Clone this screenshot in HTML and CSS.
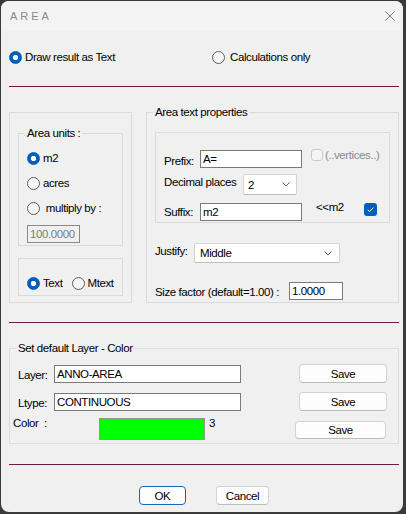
FILE: index.html
```html
<!DOCTYPE html>
<html>
<head>
<meta charset="utf-8">
<title>AREA</title>
<link rel="stylesheet" href="styles.css">
</head>
<body>
<div class="window">
  <div class="titlebar">
    <span class="title">AREA</span>
    <svg class="close" width="10" height="10" viewBox="0 0 10 10"><path d="M0.5 0.5L9.5 9.5M9.5 0.5L0.5 9.5" stroke="#808080" stroke-width="1" fill="none"/></svg>
  </div>
  <div class="content">
    <div class="mode-row">
      <div class="opt opt-draw"><span class="radio on"></span>Draw result as Text</div>
      <div class="opt opt-calc"><span class="radio"></span>Calculations only</div>
    </div>
    <div class="sep sep-top"></div>

    <div class="main-row">
      <div class="units-box">
        <fieldset class="units-group">
          <legend>Area units :</legend>
          <div class="opt unit-opt"><span class="radio on"></span>m2</div>
          <div class="opt unit-opt"><span class="radio"></span>acres</div>
          <div class="opt unit-opt"><span class="radio"></span>&nbsp;multiply by :</div>
          <div class="field field-disabled mult-field">100.0000</div>
        </fieldset>
        <div class="type-box">
          <div class="opt"><span class="radio on"></span>Text</div>
          <div class="opt mtext-opt"><span class="radio"></span>Mtext</div>
        </div>
      </div>

      <fieldset class="props-group">
        <legend>Area text properties</legend>
        <div class="props-inner">
          <div class="prow prow-prefix">
            <span class="lbl lbl-prefix">Prefix:</span>
            <div class="field field-prefix">A=</div>
            <span class="check check-disabled"></span>
            <span class="vert-text">(..vertices..)</span>
          </div>
          <div class="prow prow-dec">
            <span class="lbl lbl-dec">Decimal places</span>
            <div class="combo combo-dec"><span>2</span><svg class="chev" width="8" height="5" viewBox="0 0 8 5"><path d="M0.5 0.5L4 4L7.5 0.5" stroke="#606060" stroke-width="1" fill="none"/></svg></div>
          </div>
          <div class="prow prow-suffix">
            <span class="lbl lbl-suffix">Suffix:</span>
            <div class="field field-suffix">m2</div>
            <span class="m2-text">&lt;&lt;m2</span>
            <svg class="check-on" width="13" height="13" viewBox="0 0 13 13"><rect x="0" y="0" width="13" height="13" rx="3" fill="#005fb8"/><path d="M3.6 6.7L5.6 8.6L9.4 4.6" stroke="#ffffff" stroke-width="1" fill="none"/></svg>
          </div>
        </div>
        <div class="prow prow-justify">
          <span class="lbl lbl-justify">Justify:</span>
          <div class="combo combo-justify"><span>Middle</span><svg class="chev" width="8" height="5" viewBox="0 0 8 5"><path d="M0.5 0.5L4 4L7.5 0.5" stroke="#606060" stroke-width="1" fill="none"/></svg></div>
        </div>
        <div class="prow prow-size">
          <span class="lbl lbl-size">Size factor (default=1.00) :</span>
          <div class="field field-size">1.0000</div>
        </div>
      </fieldset>
    </div>

    <div class="sep sep-mid"></div>

    <fieldset class="layer-group">
      <legend>Set default Layer - Color</legend>
      <div class="lrow lrow-layer">
        <span class="lbl lbl-layer">Layer:</span>
        <div class="field field-layer">ANNO-AREA</div>
        <div class="btn btn-save">Save</div>
      </div>
      <div class="lrow lrow-ltype">
        <span class="lbl lbl-layer">Ltype:</span>
        <div class="field field-layer">CONTINUOUS</div>
        <div class="btn btn-save">Save</div>
      </div>
      <div class="lrow lrow-color">
        <span class="lbl lbl-color">Color&nbsp; :</span>
        <div class="swatch"></div>
        <span class="color-num">3</span>
        <div class="btn btn-save btn-save-color">Save</div>
      </div>
    </fieldset>

    <div class="sep sep-bottom"></div>

    <div class="buttons">
      <div class="btn btn-ok">OK</div>
      <div class="btn btn-cancel">Cancel</div>
    </div>
  </div>
</div>
</body>
</html>
```

FILE: styles.css
```css
* { box-sizing: border-box; }
html, body { margin: 0; padding: 0; }
body {
  background: #3a3a3a;
  width: 406px;
  height: 514px;
  overflow: hidden;
  font-family: "Liberation Sans", Arial, sans-serif;
  font-size: 11.5px;
  letter-spacing: -0.4px;
  line-height: 14px;
  color: #000;
}
.window {
  margin: 1px 0 0 1px;
  width: 402px;
  height: 511px;
  background: #f0f0f0;
  border-radius: 8px;
  overflow: hidden;
}
.titlebar {
  height: 30px;
  background: #f3f3f3;
  display: flex;
  align-items: center;
  justify-content: space-between;
  padding: 0 8px 0 9px;
}
.title {
  font-size: 11px;
  letter-spacing: 3px;
  color: #8a8a8a;
}
.close { display: block; }
.content { padding: 0 4px 0 8px; }

.mode-row {
  display: flex;
  align-items: center;
  height: 16px;
  margin-top: 18px;
}
.opt {
  display: flex;
  align-items: center;
  gap: 3px;
  height: 16px;
  white-space: nowrap;
}
.opt-draw { width: 203px; }
.opt-calc { gap: 5px; }

.radio {
  flex: none;
  width: 13px;
  height: 13px;
  border-radius: 50%;
  border: 1px solid #5f5f5f;
  background: #f6f6f6;
}
.radio.on {
  border-color: #005fb8;
  background: radial-gradient(circle, #ffffff 0 2.4px, #005fb8 3px);
}

.sep { height: 1px; background: #6e1a46; }
.sep-top { margin-top: 21px; }
.sep-mid { margin-top: 19px; }
.sep-bottom { margin-top: 20px; }

.main-row {
  display: flex;
  align-items: flex-start;
  margin-top: 18px;
}

fieldset {
  margin: 0;
  min-width: 0;
  border: 1px solid #dadada;
}
legend {
  padding: 0 2px;
  margin-left: -2px;
  line-height: 14px;
}

.units-box {
  flex: none;
  width: 123px;
  height: 191px;
  margin-top: 7px;
  border: 1px solid #dadada;
  padding: 13px 0 0 8px;
}
.units-group {
  width: 105px;
  padding: 10px 0 2px 8px;
}
.unit-opt + .unit-opt { margin-top: 9px; }
.mult-field { margin-top: 9px; width: 53px; }

.type-box {
  width: 105px;
  height: 38px;
  margin-top: 12px;
  border: 1px solid #dadada;
  padding: 16px 0 0 8px;
  display: flex;
}
.mtext-opt { margin-left: 9px; }

.field {
  height: 18px;
  border: 1px solid #7a7a7a;
  background: #ffffff;
  padding: 0 2px;
  display: flex;
  align-items: center;
  white-space: nowrap;
  flex: none;
}
.field-disabled {
  background: #f0f0f0;
  border-color: #8a8a8a;
  color: #7d7d7d;
}

.props-group {
  flex: none;
  width: 253px;
  margin-left: 14px;
  padding: 0 0 2px 8px;
}
.props-inner {
  width: 235px;
  height: 91px;
  margin-top: 13px;
  border: 1px solid #dadada;
  padding: 15px 0 0 8px;
}
.prow {
  display: flex;
  align-items: flex-start;
  white-space: nowrap;
}
.lbl { flex: none; }
.lbl-prefix { width: 36px; margin-top: 6px; }
.field-prefix { width: 102px; margin-top: 2px; }
.check-disabled {
  flex: none;
  width: 12px;
  height: 12px;
  margin: 1px 0 0 9px;
  border: 1px solid #c9c9c9;
  border-radius: 3px;
  background: #f4f4f4;
}
.vert-text { margin-left: 2px; color: #8a8a8a; }

.prow-dec { margin-top: 6px; }
.lbl-dec { width: 79px; margin-top: 1px; }
.combo {
  flex: none;
  display: flex;
  align-items: center;
  justify-content: space-between;
  background: #ffffff;
  border: 1px solid #d3d3d3;
  border-bottom-color: #bdbdbd;
  border-radius: 2px;
}
.combo-dec { width: 54px; height: 21px; padding: 0 6px 0 4px; }
.chev { display: block; }

.prow-suffix { margin-top: 5px; }
.lbl-suffix { width: 36px; margin-top: 5px; }
.field-suffix { width: 102px; margin-top: 3px; }
.m2-text { width: 48px; margin-left: 14px; }
.check-on { flex: none; display: block; margin-top: 3px; }

.prow-justify { margin-top: 20px; }
.lbl-justify { width: 39px; margin-top: 1px; }
.combo-justify { width: 146px; height: 20px; padding: 0 7px 0 5px; }

.prow-size { margin-top: 19px; }
.lbl-size { width: 134px; margin-top: 3px; }
.field-size { width: 54px; }

.layer-group {
  width: 390px;
  margin-top: 18px;
  padding: 9px 0 3px 8px;
}
.lrow {
  display: flex;
  align-items: flex-start;
  white-space: nowrap;
}
.lrow-ltype { margin-top: 9px; }
.lrow-color { margin-top: 5px; }
.lbl-layer { width: 36px; margin-top: 4px; }
.field-layer { width: 187px; margin-top: 1px; }

.btn {
  flex: none;
  display: flex;
  align-items: center;
  justify-content: center;
  background: #fdfdfd;
  border: 1px solid #d3d3d3;
  border-bottom-color: #bcbcbc;
  border-radius: 4px;
}
.btn-save { width: 88px; height: 19px; margin-left: 58px; }

.lbl-color { width: 86px; margin-left: -5px; }
.swatch {
  flex: none;
  width: 106px;
  height: 22px;
  margin-top: 2px;
  background: #00ff00;
  border: 1px solid #8a9a8a;
}
.color-num { width: 6px; margin-left: 4px; }
.btn-save-color { width: 91px; height: 18px; margin-left: 80px; margin-top: 5px; }

.buttons {
  display: flex;
  justify-content: center;
  gap: 30px;
  margin-top: 21px;
}
.btn-ok { width: 47px; height: 19px; border-color: #1768b8; }
.btn-cancel { width: 53px; height: 19px; }
```
